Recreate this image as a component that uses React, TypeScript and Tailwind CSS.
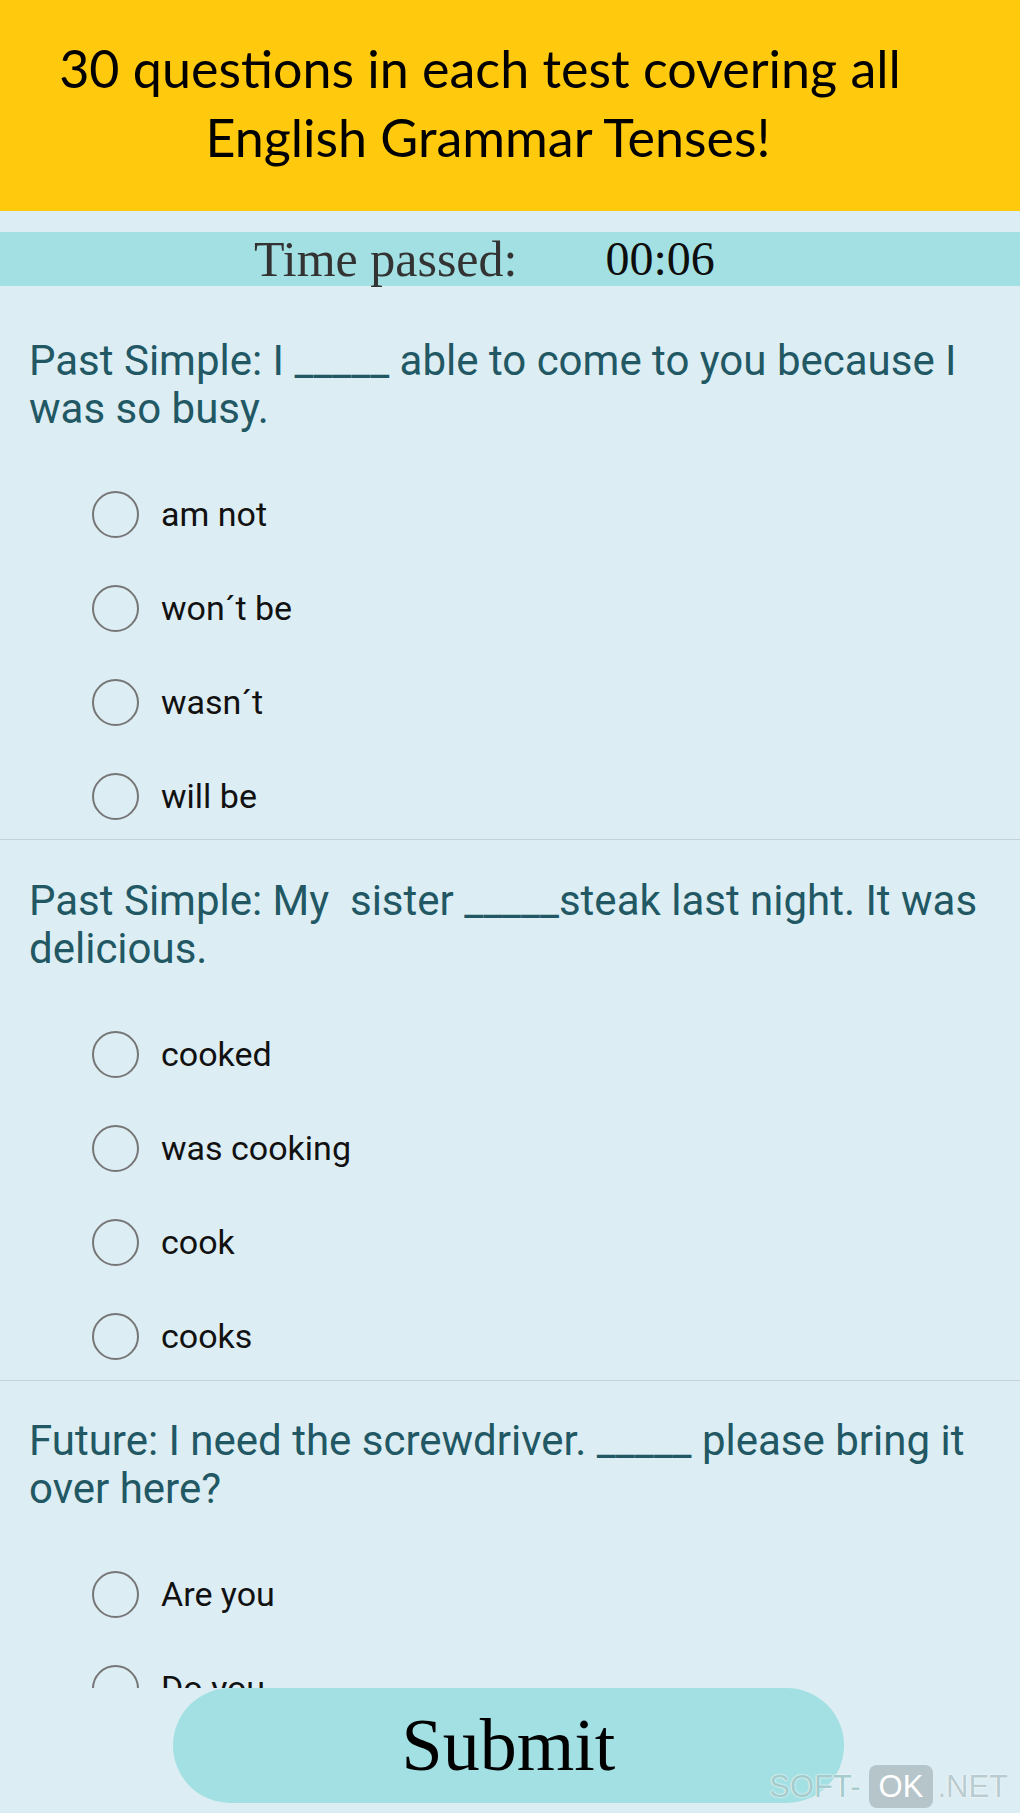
import React from "react";

type Q = { text: string; options: string[]; pt: string; gap: string; divMt: string };

const questions: Q[] = [
  {
    text: "Past Simple: I _____ able to come to you because I was so busy.",
    options: ["am not", "won\u00b4t be", "wasn\u00b4t", "will be"],
    pt: "pt-[51px]",
    gap: "mt-[34px]",
    divMt: "-mt-[4px]",
  },
  {
    text: "Past Simple: My\u00a0 sister _____steak last night. It was delicious.",
    options: ["cooked", "was cooking", "cook", "cooks"],
    pt: "pt-[37px]",
    gap: "mt-[34px]",
    divMt: "-mt-[3px]",
  },
  {
    text: "Future: I need the screwdriver. _____ please bring it over here?",
    options: ["Are you", "Do you", "Will you", "Were you"],
    pt: "pt-[36px]",
    gap: "mt-[34px]",
    divMt: "mt-0",
  },
];

function Option({ label }: { label: string }) {
  return (
    <div className="flex h-[94px] items-center pl-[92px]">
      <div className="h-[47px] w-[47px] shrink-0 rounded-full border-2 border-[#767676]" />
      <span
        className="ml-[22px] text-[34px] text-[#111111]"
        style={{ fontFamily: "Roboto, sans-serif" }}
      >
        {label}
      </span>
    </div>
  );
}

export default function App() {
  return (
    <div className="relative flex h-[1813px] w-[1020px] flex-col overflow-hidden bg-[#dcedf3]">
      {/* Header */}
      <div
        className="h-[211px] shrink-0 bg-[#ffc90e] pr-[52px] pt-[34px] text-center text-[52px] leading-[69px] text-black"
        style={{ fontFamily: "Lato, 'Open Sans', sans-serif" }}
      >
        <div className="whitespace-nowrap pr-[8px]">30 questions in each test covering all</div>
        <div className="whitespace-nowrap pl-[8px]">English Grammar Tenses!</div>
      </div>

      {/* Timer bar */}
      <div
        className="mt-[21px] flex h-[54px] shrink-0 items-center bg-[#a3e0e3] pl-[254px] text-[50px]"
        style={{ fontFamily: "'Liberation Serif', serif" }}
      >
        <span className="text-[#333333]">Time passed:</span>
        <span className="ml-[88px] text-[48px] text-[#0d0d0d]">00:06</span>
      </div>

      {/* Questions list */}
      <div className="h-[1402px] shrink-0 overflow-hidden">
        {questions.map((q, i) => (
          <div key={i} className={q.pt}>
            <p
              className="pl-[29px] pr-[30px] text-[42px] leading-[48px] text-[#215864]"
              style={{ fontFamily: "Roboto, sans-serif" }}
            >
              {q.text}
            </p>
            <div className={q.gap}>
              {q.options.map((o) => (
                <Option key={o} label={o} />
              ))}
            </div>
            <div className={`${q.divMt} h-px w-full bg-[#c3d3d8]`} />
          </div>
        ))}
      </div>

      {/* Submit */}
      <div className="flex shrink-0 pl-[173px]">
        <button
          className="flex h-[115px] w-[671px] items-center justify-center rounded-full bg-[#a3e0e3] text-[74px] text-black"
          style={{ fontFamily: "'Liberation Serif', serif" }}
        >
          Submit
        </button>
      </div>

      {/* Watermark */}
      <div
        className="absolute bottom-[5px] right-[12px] flex items-center text-[31px] leading-none"
        style={{ fontFamily: "'Liberation Sans', Arial, sans-serif" }}
      >
        <span className="text-[#a4cccd] [text-shadow:0_0_2px_#ffffff,0_0_1px_#ffffff]">SOFT-</span>
        <span className="ml-[8px] rounded-[8px] bg-[#b5c5c9] px-[10px] py-[6px] text-white">OK</span>
        <span className="ml-[4px] text-[#b9ccd0] [text-shadow:0_0_2px_#ffffff,0_0_1px_#ffffff]">.NET</span>
      </div>
    </div>
  );
}
